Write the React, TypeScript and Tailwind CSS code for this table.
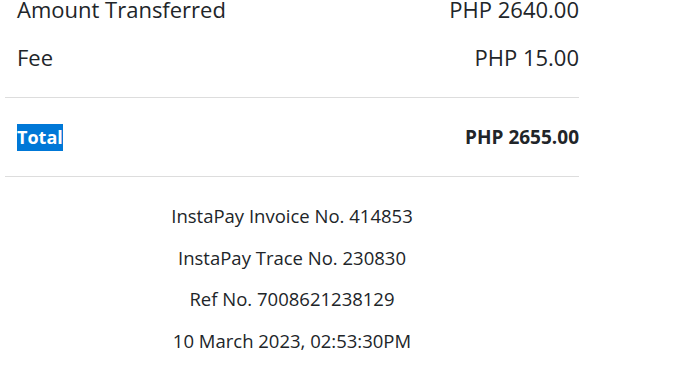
export default function App() {
  const details = [
    'InstaPay Invoice No. 414853',
    'InstaPay Trace No. 230830',
    'Ref No. 7008621238129',
    '10 March 2023, 02:53:30PM',
  ]

  return (
    <div className="w-full min-h-screen bg-white overflow-hidden text-[#212529] font-['Open_Sans',sans-serif]">
      <div className="w-[574px] ml-[5px] -mt-[6px]">
        <div className="flex flex-col gap-[18px] pl-3 pb-[25px] border-b border-[#dddddd] text-[22px] leading-[30px]">
          <div className="flex justify-between">
            <span>Amount Transferred</span>
            <span>PHP 2640.00</span>
          </div>
          <div className="flex justify-between">
            <span>Fee</span>
            <span>PHP 15.00</span>
          </div>
        </div>

        <div className="h-[79px] flex items-center justify-between pl-3 border-b border-[#dddddd] font-bold">
          <span className="bg-[#0078d7] text-white text-[18px] leading-[27px]">Total</span>
          <span className="text-[19px]">PHP 2655.00</span>
        </div>

        <div className="pt-[18px] text-center text-[18.5px] leading-[41.5px]">
          {details.map((line) => (
            <p key={line}>{line}</p>
          ))}
        </div>
      </div>
    </div>
  )
}
